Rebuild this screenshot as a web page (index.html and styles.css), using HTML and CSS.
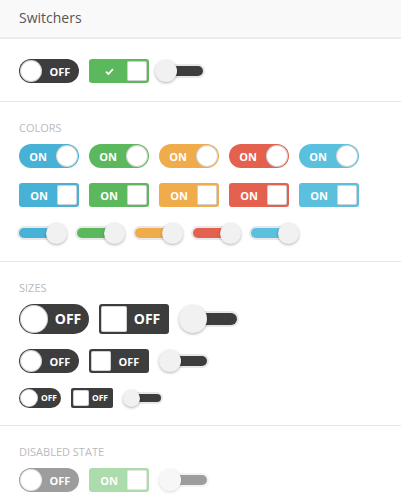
FILE: index.html
```html
<!DOCTYPE html>
<html lang="en">
<head>
    <meta charset="UTF-8">
    <meta name="viewport" content="width=device-width, initial-scale=1.0">
    <title>Switchers</title>
    <link rel="stylesheet" href="styles.css">
</head>
<body>
    <div class="panel">
        <div class="panel-head">Switchers</div>

        <div class="section first">
            <div class="row">
                <span class="switch round md dark"><span class="knob"></span><span class="txt">OFF</span></span>
                <span class="switch square md green">
                    <span class="txt">
                        <svg class="check" width="9" height="7" viewBox="0 0 9 7"><path d="M1 3.6 L3.4 6 L8 1.2" fill="none" stroke="#fff" stroke-width="1.8"/></svg>
                    </span>
                    <span class="knob"></span>
                </span>
                <span class="slider md off tight"><span class="knob"></span></span>
            </div>
        </div>

        <div class="section">
            <div class="label">Colors</div>
            <div class="row">
                <span class="switch round md blue"><span class="txt">ON</span><span class="knob"></span></span>
                <span class="switch round md green"><span class="txt">ON</span><span class="knob"></span></span>
                <span class="switch round md orange"><span class="txt">ON</span><span class="knob"></span></span>
                <span class="switch round md red"><span class="txt">ON</span><span class="knob"></span></span>
                <span class="switch round md cyan"><span class="txt">ON</span><span class="knob"></span></span>
            </div>
            <div class="row">
                <span class="switch square md blue"><span class="txt">ON</span><span class="knob"></span></span>
                <span class="switch square md green"><span class="txt">ON</span><span class="knob"></span></span>
                <span class="switch square md orange"><span class="txt">ON</span><span class="knob"></span></span>
                <span class="switch square md red"><span class="txt">ON</span><span class="knob"></span></span>
                <span class="switch square md cyan"><span class="txt">ON</span><span class="knob"></span></span>
            </div>
            <div class="row">
                <span class="slider cl on blue"><span class="knob"></span></span>
                <span class="slider cl on green"><span class="knob"></span></span>
                <span class="slider cl on orange"><span class="knob"></span></span>
                <span class="slider cl on red"><span class="knob"></span></span>
                <span class="slider cl on cyan"><span class="knob"></span></span>
            </div>
        </div>

        <div class="section">
            <div class="label">Sizes</div>
            <div class="row">
                <span class="switch round lg dark"><span class="knob"></span><span class="txt">OFF</span></span>
                <span class="switch square lg dark"><span class="knob"></span><span class="txt">OFF</span></span>
                <span class="slider lg off"><span class="knob"></span></span>
            </div>
            <div class="row">
                <span class="switch round md dark"><span class="knob"></span><span class="txt">OFF</span></span>
                <span class="switch square md dark"><span class="knob"></span><span class="txt">OFF</span></span>
                <span class="slider md off"><span class="knob"></span></span>
            </div>
            <div class="row">
                <span class="switch round sm dark"><span class="knob"></span><span class="txt">OFF</span></span>
                <span class="switch square sm dark"><span class="knob"></span><span class="txt">OFF</span></span>
                <span class="slider sm off"><span class="knob"></span></span>
            </div>
        </div>

        <div class="section last">
            <div class="label">Disabled state</div>
            <div class="row disabled">
                <span class="switch round md dark"><span class="knob"></span><span class="txt">OFF</span></span>
                <span class="switch square md green"><span class="txt">ON</span><span class="knob"></span></span>
                <span class="slider md off"><span class="knob"></span></span>
            </div>
        </div>
    </div>
</body>
</html>
```

FILE: styles.css
```css
body {
    margin: 0;
    background: #fff;
    font-family: 'Open Sans', 'Liberation Sans', sans-serif;
    color: #555;
}
.panel-head {
    height: 37px;
    line-height: 36px;
    padding-left: 19px;
    font-size: 14px;
    color: #555;
    background: #f9f9f9;
    border-bottom: 2px solid #ececec;
}
.section {
    padding: 19px 19px 17px;
    border-bottom: 1px solid #e6e6e6;
}
.section.first {
    padding: 20px 19px 18px;
}
.section.last {
    border-bottom: none;
}
.label {
    font-size: 11px;
    line-height: 14px;
    color: #bbb;
    text-transform: uppercase;
}
.row {
    display: flex;
    align-items: center;
    gap: 10px;
    margin-top: 15px;
}
.label + .row {
    margin-top: 9px;
}
.section.first .row {
    margin-top: 0;
}
.disabled {
    opacity: 0.5;
}

/* toggles */
.switch {
    display: inline-flex;
    align-items: center;
    box-sizing: border-box;
    color: #fff;
    font-weight: 700;
}
.switch .txt {
    flex: 1;
    text-align: center;
    line-height: 1;
}
.switch .knob {
    background: #fff;
    box-shadow: inset 0 0 0 1px rgba(0,0,0,0.18);
    flex: none;
}
.switch.round .knob {
    border-radius: 50%;
}
.switch.square .knob {
    border-radius: 2px;
}

.switch.md { width: 60px; height: 24px; font-size: 11px; }
.switch.md.round { border-radius: 12px; padding: 1px; }
.switch.md.round .knob { width: 22px; height: 22px; }
.switch.md.square { border-radius: 3px; padding: 2px; }
.switch.md.square .knob { width: 20px; height: 20px; }

.switch.lg { width: 70px; height: 30px; font-size: 14px; }
.switch.lg.round { border-radius: 15px; padding: 1px; }
.switch.lg.round .knob { width: 28px; height: 28px; }
.switch.lg.square { border-radius: 3px; padding: 2px; }
.switch.lg.square .knob { width: 26px; height: 26px; }

.switch.sm { width: 42px; height: 20px; font-size: 8.5px; }
.switch.sm.round { border-radius: 10px; padding: 1px; }
.switch.sm.round .knob { width: 18px; height: 18px; }
.switch.sm.square { border-radius: 2px; padding: 2px; }
.switch.sm.square .knob { width: 16px; height: 16px; }

.check {
    display: block;
    margin: 0 auto;
}

.dark   { background: #3d3d3d; }
.blue   { background: #47b2d6; }
.green  { background: #5cb85c; }
.orange { background: #f0ac4b; }
.red    { background: #e5614f; }
.cyan   { background: #5bbfde; }

/* sliders */
.slider {
    position: relative;
    display: inline-flex;
    align-items: center;
    background: none;
}
.slider::before {
    content: '';
    position: absolute;
    top: 50%;
    border-radius: 10px;
    background: #3d3d3d;
    box-shadow: 0 0 0 2px #e8e8e8;
}
.slider.off::before { left: 6px; right: 0; }
.slider.on::before { left: 0; right: 4px; }
.slider.blue::before   { background: #47b2d6; }
.slider.green::before  { background: #5cb85c; }
.slider.orange::before { background: #f0ac4b; }
.slider.red::before    { background: #e5614f; }
.slider.cyan::before   { background: #5bbfde; }

.slider .knob {
    position: relative;
    border-radius: 50%;
    background: #f1f1f1;
    box-shadow: 0 1px 3px rgba(0,0,0,0.3);
}
.slider.on .knob { margin-left: auto; }

.slider.md { width: 48px; height: 22px; }
.slider.md::before { height: 10px; margin-top: -5px; }
.slider.md .knob { width: 22px; height: 22px; }
.slider.tight { margin-left: -4px; }

.slider.cl { width: 48px; height: 22px; }
.slider.cl::before { height: 10px; margin-top: -5px; }
.slider.cl .knob { width: 21px; height: 21px; }

.slider.lg { width: 58px; height: 28px; }
.slider.lg::before { height: 12px; margin-top: -6px; }
.slider.lg .knob { width: 28px; height: 28px; }

.slider.sm { width: 38px; height: 16px; }
.slider.sm::before { height: 8px; margin-top: -4px; }
.slider.sm .knob { width: 17px; height: 17px; }
```
